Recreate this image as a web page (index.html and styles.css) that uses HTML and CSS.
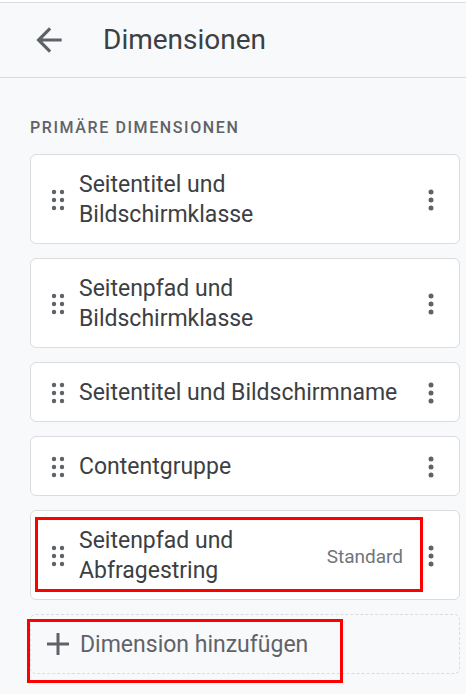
FILE: index.html
```html
<!DOCTYPE html>
<html lang="de">
<head>
<meta charset="utf-8">
<title>Dimensionen</title>
<link rel="stylesheet" href="styles.css">
</head>
<body>
<div class="page">
  <header class="header">
    <svg class="back" viewBox="0 0 24 24" width="38" height="38" aria-hidden="true"><path d="M20 11H7.83l5.59-5.59L12 4l-8 8 8 8 1.41-1.41L7.83 13H20v-2z"/></svg>
    <h1 class="title">Dimensionen</h1>
  </header>
  <main class="content">
    <div class="label">PRIMÄRE DIMENSIONEN</div>
    <div class="list">
      <div class="card">
        <svg class="drag" viewBox="0 0 16 22" width="16" height="22" aria-hidden="true"><circle cx="4" cy="3" r="2.2"/><circle cx="12" cy="3" r="2.2"/><circle cx="4" cy="11" r="2.2"/><circle cx="12" cy="11" r="2.2"/><circle cx="4" cy="19" r="2.2"/><circle cx="12" cy="19" r="2.2"/></svg>
        <div class="name">Seitentitel und<br>Bildschirmklasse</div>
        <svg class="more" viewBox="0 0 24 24" width="24" height="24" aria-hidden="true"><circle cx="12" cy="4" r="2.5"/><circle cx="12" cy="12" r="2.5"/><circle cx="12" cy="20" r="2.5"/></svg>
      </div>
      <div class="card">
        <svg class="drag" viewBox="0 0 16 22" width="16" height="22" aria-hidden="true"><circle cx="4" cy="3" r="2.2"/><circle cx="12" cy="3" r="2.2"/><circle cx="4" cy="11" r="2.2"/><circle cx="12" cy="11" r="2.2"/><circle cx="4" cy="19" r="2.2"/><circle cx="12" cy="19" r="2.2"/></svg>
        <div class="name">Seitenpfad und<br>Bildschirmklasse</div>
        <svg class="more" viewBox="0 0 24 24" width="24" height="24" aria-hidden="true"><circle cx="12" cy="4" r="2.5"/><circle cx="12" cy="12" r="2.5"/><circle cx="12" cy="20" r="2.5"/></svg>
      </div>
      <div class="card">
        <svg class="drag" viewBox="0 0 16 22" width="16" height="22" aria-hidden="true"><circle cx="4" cy="3" r="2.2"/><circle cx="12" cy="3" r="2.2"/><circle cx="4" cy="11" r="2.2"/><circle cx="12" cy="11" r="2.2"/><circle cx="4" cy="19" r="2.2"/><circle cx="12" cy="19" r="2.2"/></svg>
        <div class="name">Seitentitel und Bildschirmname</div>
        <svg class="more" viewBox="0 0 24 24" width="24" height="24" aria-hidden="true"><circle cx="12" cy="4" r="2.5"/><circle cx="12" cy="12" r="2.5"/><circle cx="12" cy="20" r="2.5"/></svg>
      </div>
      <div class="card">
        <svg class="drag" viewBox="0 0 16 22" width="16" height="22" aria-hidden="true"><circle cx="4" cy="3" r="2.2"/><circle cx="12" cy="3" r="2.2"/><circle cx="4" cy="11" r="2.2"/><circle cx="12" cy="11" r="2.2"/><circle cx="4" cy="19" r="2.2"/><circle cx="12" cy="19" r="2.2"/></svg>
        <div class="name">Contentgruppe</div>
        <svg class="more" viewBox="0 0 24 24" width="24" height="24" aria-hidden="true"><circle cx="12" cy="4" r="2.5"/><circle cx="12" cy="12" r="2.5"/><circle cx="12" cy="20" r="2.5"/></svg>
      </div>
      <div class="card">
        <svg class="drag" viewBox="0 0 16 22" width="16" height="22" aria-hidden="true"><circle cx="4" cy="3" r="2.2"/><circle cx="12" cy="3" r="2.2"/><circle cx="4" cy="11" r="2.2"/><circle cx="12" cy="11" r="2.2"/><circle cx="4" cy="19" r="2.2"/><circle cx="12" cy="19" r="2.2"/></svg>
        <div class="name">Seitenpfad und<br>Abfragestring</div>
        <span class="tag">Standard</span>
        <svg class="more" viewBox="0 0 24 24" width="24" height="24" aria-hidden="true"><circle cx="12" cy="4" r="2.5"/><circle cx="12" cy="12" r="2.5"/><circle cx="12" cy="20" r="2.5"/></svg>
        <div class="mark mark-card"></div>
      </div>
      <div class="add">
        <svg class="plus" viewBox="0 0 22 22" width="22" height="22" aria-hidden="true"><path d="M9.5 0h3v9.5H22v3h-9.5V22h-3v-9.5H0v-3h9.5z"/></svg>
        <span class="add-text">Dimension hinzufügen</span>
        <div class="mark mark-add"></div>
      </div>
    </div>
  </main>
</div>
</body>
</html>
```

FILE: styles.css
```css
html, body {
  margin: 0;
  padding: 0;
}
body {
  background: #ffffff;
  font-family: Roboto, "Liberation Sans", Arial, sans-serif;
  color: #3c4043;
}
.page {
  margin-top: 2px;
  background: #f8f9fa;
  min-height: 692px;
}
.header {
  display: flex;
  align-items: center;
  height: 74px;
  padding-left: 30px;
  border-top: 1px solid #dadce0;
  border-bottom: 1px solid #dadce0;
}
.back {
  fill: #5f6368;
  flex: none;
}
.title {
  margin: 0 0 0 35px;
  font-size: 28px;
  font-weight: 400;
  color: #3c4043;
  line-height: 36px;
}
.content {
  padding: 40px 6px 0 30px;
}
.label {
  font-size: 16px;
  line-height: 20px;
  font-weight: 500;
  letter-spacing: 1.6px;
  color: #5f6368;
  margin-bottom: 16px;
}
.list {
  display: flex;
  flex-direction: column;
  gap: 14px;
}
.card {
  position: relative;
  display: flex;
  align-items: center;
  background: #ffffff;
  border: 1px solid #dadce0;
  border-radius: 6px;
  padding: 15px 16px 13px 19px;
}
.drag {
  fill: #5f6368;
  flex: none;
  margin-right: 13px;
}
.name {
  flex: 1;
  font-size: 23px;
  line-height: 30px;
  color: #3c4043;
}
.tag {
  font-size: 19px;
  color: #70757a;
  margin-right: 16px;
}
.more {
  fill: #5f6368;
  flex: none;
}
.add {
  position: relative;
  display: flex;
  align-items: center;
  height: 58px;
  border: 1px dashed #dadce0;
  border-radius: 6px;
  padding-left: 16px;
}
.plus {
  fill: #5f6368;
  flex: none;
  margin-right: 11px;
}
.add-text {
  font-size: 23px;
  font-weight: 400;
  color: #5f6368;
}
.mark {
  position: absolute;
  border: 3px solid #ff0000;
  box-sizing: border-box;
  pointer-events: none;
}
.mark-card {
  left: 4px;
  top: 6px;
  width: 388px;
  height: 75px;
}
.mark-add {
  left: -4px;
  top: 4px;
  width: 316px;
  height: 64px;
}
```
